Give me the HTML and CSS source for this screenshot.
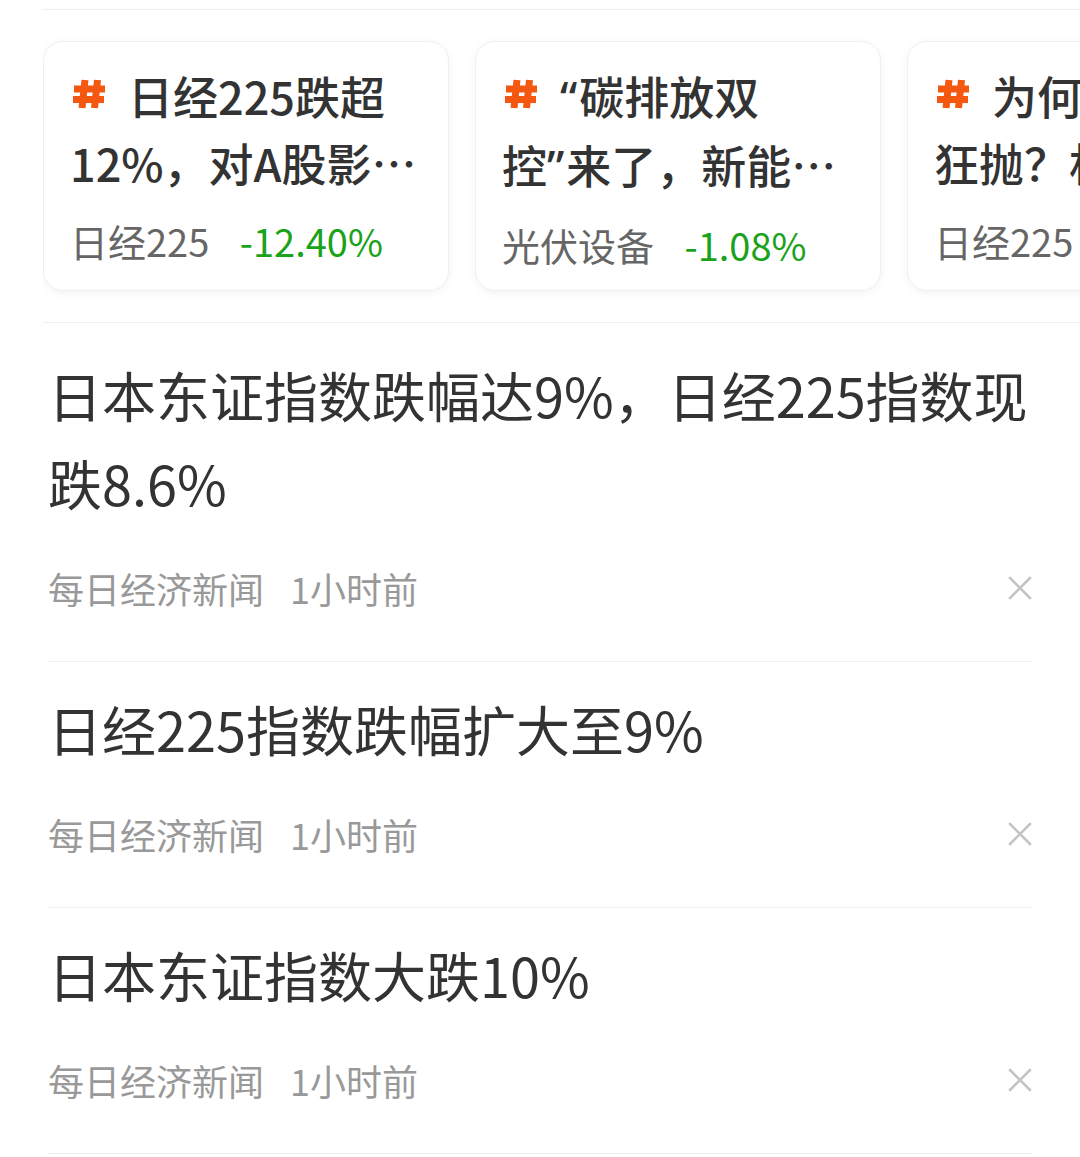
FILE: index.html
```html
<!DOCTYPE html>
<html>
<head>
    <meta charset="utf-8">
    <title>资讯</title>
    <link rel="stylesheet" href="styles.css">
</head>
<body>
    <div class="page">
        <div class="topics">
            <div class="topic-card">
                <div class="topic-title"><svg class="hash" width="36" height="32" viewBox="0 0 36 32"><path d="M14 2L11 30M26.5 2L23.5 30M3 11H34M2 21.5H33" stroke="#f4570f" stroke-width="7" fill="none"/></svg>日经225跌超</div>
                <div class="topic-title clip">12%，对A股影响几何？</div>
                <div class="topic-meta">
                    <span class="topic-name">日经225</span>
                    <span class="topic-change">-12.40%</span>
                </div>
            </div>
            <div class="topic-card">
                <div class="topic-title"><svg class="hash" width="36" height="32" viewBox="0 0 36 32"><path d="M14 2L11 30M26.5 2L23.5 30M3 11H34M2 21.5H33" stroke="#f4570f" stroke-width="7" fill="none"/></svg><span class="quote">“</span>碳排放双</div>
                <div class="topic-title clip">控<span class="quote">”</span>来了，新能源迎来新机遇</div>
                <div class="topic-meta">
                    <span class="topic-name">光伏设备</span>
                    <span class="topic-change">-1.08%</span>
                </div>
            </div>
            <div class="topic-card">
                <div class="topic-title"><svg class="hash" width="36" height="32" viewBox="0 0 36 32"><path d="M14 2L11 30M26.5 2L23.5 30M3 11H34M2 21.5H33" stroke="#f4570f" stroke-width="7" fill="none"/></svg>为何日股遭</div>
                <div class="topic-title clip">狂抛？机构怎么看</div>
                <div class="topic-meta">
                    <span class="topic-name">日经225</span>
                    <span class="topic-change">-12.40%</span>
                </div>
            </div>
        </div>

        <ul class="news-list">
            <li class="news-item">
                <div class="news-title">日本东证指数跌幅达9%，日经225指数现跌8.6%</div>
                <div class="news-meta">
                    <span class="news-source">每日经济新闻</span>
                    <span class="news-time">1小时前</span>
                    <svg class="close" width="24" height="24" viewBox="0 0 24 24">
                        <path d="M2 2L22 22M22 2L2 22" stroke="#c4c4c4" stroke-width="2.6" stroke-linecap="round" fill="none"/>
                    </svg>
                </div>
            </li>
            <li class="news-item">
                <div class="news-title">日经225指数跌幅扩大至9%</div>
                <div class="news-meta">
                    <span class="news-source">每日经济新闻</span>
                    <span class="news-time">1小时前</span>
                    <svg class="close" width="24" height="24" viewBox="0 0 24 24">
                        <path d="M2 2L22 22M22 2L2 22" stroke="#c4c4c4" stroke-width="2.6" stroke-linecap="round" fill="none"/>
                    </svg>
                </div>
            </li>
            <li class="news-item">
                <div class="news-title">日本东证指数大跌10%</div>
                <div class="news-meta">
                    <span class="news-source">每日经济新闻</span>
                    <span class="news-time">1小时前</span>
                    <svg class="close" width="24" height="24" viewBox="0 0 24 24">
                        <path d="M2 2L22 22M22 2L2 22" stroke="#c4c4c4" stroke-width="2.6" stroke-linecap="round" fill="none"/>
                    </svg>
                </div>
            </li>
        </ul>
    </div>
</body>
</html>
```

FILE: styles.css
```css
body {
    margin: 0;
    background-color: #fff;
    font-family: "Noto Sans CJK SC", "Noto Sans", sans-serif;
    color: #333;
}

.page {
    padding: 9px 48px 0;
    overflow: hidden;
}

.topics {
    display: flex;
    gap: 26px;
    margin: 0 -48px 0 -5px;
    padding: 31px 0 31px 0;
    border-top: 1px solid #eee;
    border-bottom: 1px solid #eee;
    overflow: hidden;
}

.topic-card {
    flex: 0 0 406px;
    width: 406px;
    min-width: 0;
    box-sizing: border-box;
    height: 250px;
    padding: 20px 20px 0 26px;
    background-color: #fff;
    border: 1px solid #f0f0f0;
    border-radius: 20px;
    box-shadow: 0 2px 8px rgba(0, 0, 0, 0.05);
}

.topic-title {
    font-size: 45px;
    line-height: 67px;
    font-weight: 500;
    color: #333;
    white-space: nowrap;
    overflow: hidden;
}

.topic-title.clip {
    text-overflow: ellipsis;
}

.hash {
    margin: 0 21px 0 1px;
    vertical-align: 5px;
}

.quote {
    font-family: "Noto Sans", sans-serif;
    margin-right: 2px;
}

.topic-meta {
    margin-top: 20px;
    font-size: 38px;
    line-height: 50px;
    white-space: nowrap;
}

.topic-name {
    color: #666;
    margin-right: 22px;
}

.topic-change {
    color: #1aa31a;
}

.news-list {
    list-style-type: none;
    margin: 0;
    padding: 0;
}

.news-item {
    padding: 23px 0 48px;
    border-bottom: 1px solid #eee;
}

.news-item:first-child {
    padding-top: 28px;
}

.news-title {
    font-size: 54px;
    line-height: 88px;
    color: #333;
}

.news-meta {
    display: flex;
    align-items: center;
    margin-top: 36px;
    height: 50px;
    font-size: 36px;
    color: #999;
}

.news-time {
    margin-left: 26px;
}

.close {
    margin-left: auto;
}
```
